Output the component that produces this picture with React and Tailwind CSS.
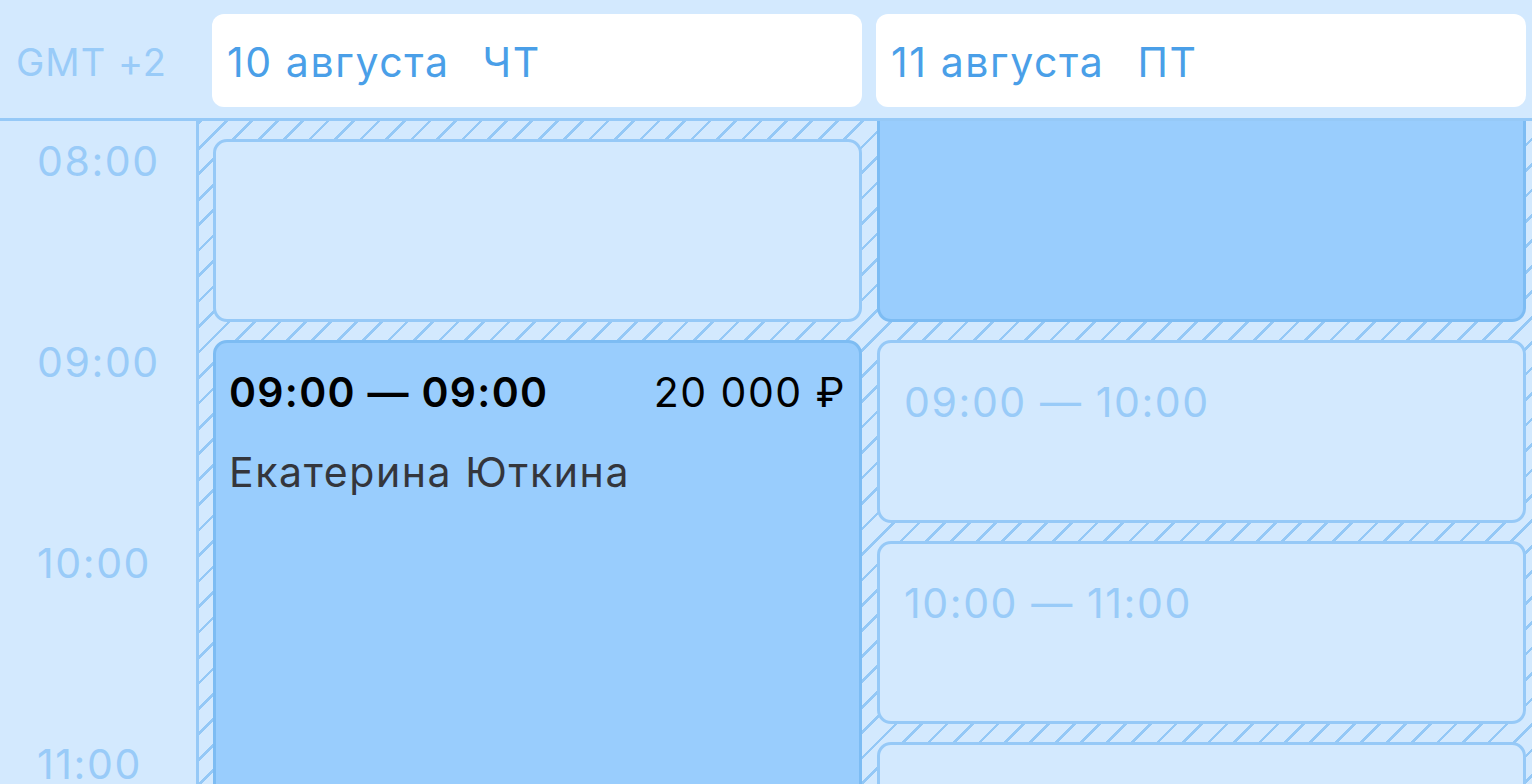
import React from 'react';

const hours = ['08:00', '09:00', '10:00', '11:00'];

const days = [
  { date: '10 августа', weekday: 'ЧТ' },
  { date: '11 августа', weekday: 'ПТ' },
];

function EmptySlot({ label }) {
  return (
    <div className="mt-[18px] h-[183px] shrink-0 rounded-[14px] border-[3px] border-[#96c9f7] bg-[#d3e9fe] pl-[24px] pt-[35px]">
      {label && (
        <div className="text-[41px] leading-[48px] tracking-[1.6px] text-[#99cbf8]">{label}</div>
      )}
    </div>
  );
}

function BookedSlot({ time, price, name }) {
  return (
    <div className="mt-[18px] h-[600px] shrink-0 rounded-[14px] border-[3px] border-[#7dbcf3] bg-[#99cdfd] px-[13px] pt-[25px]">
      <div className="flex items-center justify-between text-[41px] leading-[48px] text-black">
        <span className="font-semibold tracking-[1.3px]">{time}</span>
        <span className="tracking-[1.5px]">{price}</span>
      </div>
      <div className="mt-[32px] text-[41px] leading-[48px] tracking-[1.6px] text-[#34363c]">{name}</div>
    </div>
  );
}

export default function App() {
  return (
    <div className="w-[1532px] h-[784px] overflow-hidden bg-[#d3e9fe] font-['Inter','Noto_Sans',sans-serif]">
      {/* header */}
      <div className="flex h-[121px] border-b-[3px] border-[#96c9f7]">
        <div className="w-[196px] shrink-0 pl-[16px] pt-[40px] text-[38px] leading-[44px] tracking-[1px] text-[#99cbf8]">
          GMT +2
        </div>
        <div className="flex gap-[14px] pl-[16px] pt-[14px]">
          {days.map((d) => (
            <div
              key={d.date}
              className="flex h-[93px] w-[650px] items-center gap-[33px] rounded-[12px] bg-white pl-[15px] pt-[3px] text-[41px] leading-[48px] tracking-[1.6px] text-[#4a9fe8]"
            >
              <span>{d.date}</span>
              <span>{d.weekday}</span>
            </div>
          ))}
        </div>
      </div>

      {/* body */}
      <div className="flex h-[663px] overflow-hidden">
        <div className="w-[196px] shrink-0">
          {hours.map((h) => (
            <div key={h} className="h-[201px] pl-[37px] pt-[16px] text-[41px] leading-[48px] tracking-[1.6px] text-[#99cbf8]">
              {h}
            </div>
          ))}
        </div>
        <div className="flex flex-1 gap-[15px] border-l-[3px] border-[#96c9f7] bg-[repeating-linear-gradient(135deg,#94c8f6_0px,#94c8f6_2.6px,#d3e9fe_2.6px,#d3e9fe_18px)] pl-[14px]">
          {/* Thursday */}
          <div className="flex w-[649px] shrink-0 flex-col">
            <EmptySlot />
            <BookedSlot time="09:00 — 09:00" price="20 000 ₽" name="Екатерина Юткина" />
          </div>
          {/* Friday */}
          <div className="flex w-[649px] shrink-0 flex-col">
            <div className="h-[201px] shrink-0 rounded-b-[14px] border-x-[3px] border-b-[3px] border-[#7dbcf3] bg-[#99cdfd]" />
            <EmptySlot label="09:00 — 10:00" />
            <EmptySlot label="10:00 — 11:00" />
            <EmptySlot />
          </div>
        </div>
      </div>
    </div>
  );
}
